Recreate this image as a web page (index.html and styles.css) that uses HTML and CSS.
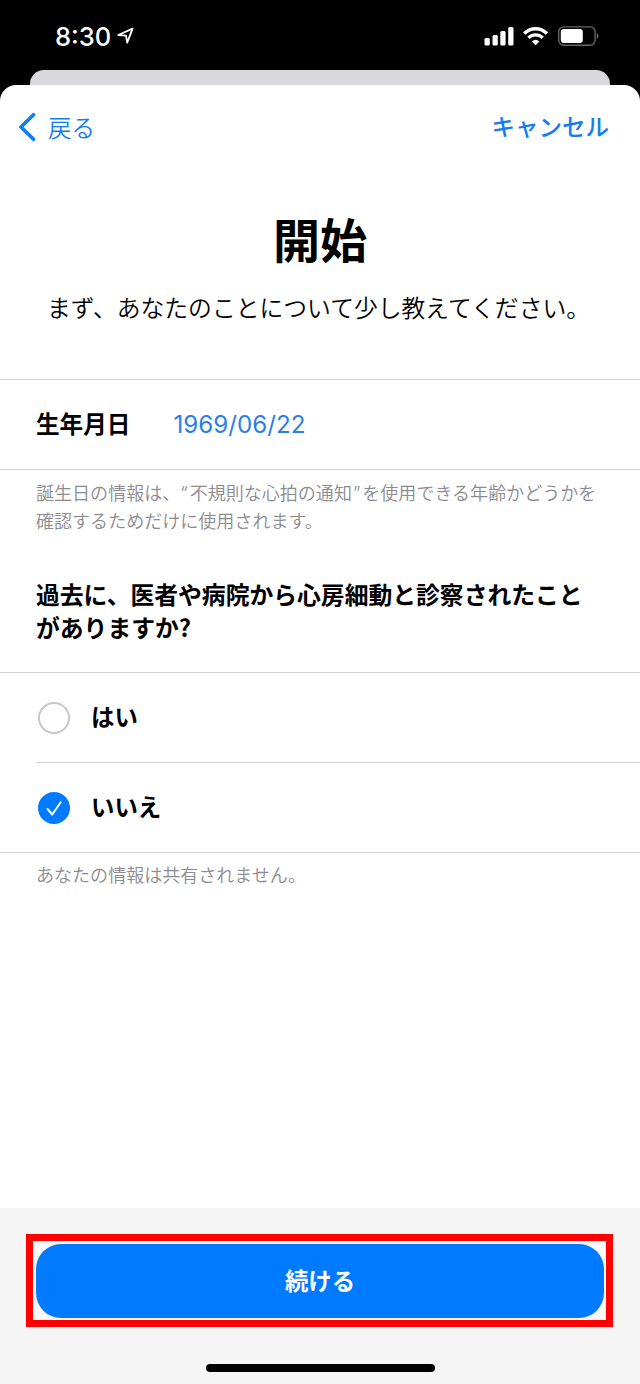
FILE: index.html
```html
<!DOCTYPE html>
<html lang="ja">
<head>
<meta charset="utf-8">
<title>開始</title>
<link rel="stylesheet" href="styles.css">
</head>
<body>
<div class="screen">
  <header class="status">
    <div class="clock">
      <span class="time">8:30</span>
      <svg class="location" width="18" height="18" viewBox="0 0 18 18"><path d="M1.3 8 15.6 1.6 10.2 15.6 9 8.7Z" fill="none" stroke="#fff" stroke-width="1.8" stroke-linejoin="round"/></svg>
    </div>
    <svg class="indicators" width="118" height="22" viewBox="0 0 118 22">
      <g fill="#fff">
        <rect x="1.5" y="13" width="5.3" height="7.4" rx="1.5"/>
        <rect x="9.5" y="10" width="5.3" height="10.4" rx="1.5"/>
        <rect x="17.3" y="6" width="5.3" height="14.4" rx="1.5"/>
        <rect x="25.2" y="2" width="5.3" height="18.4" rx="1.5"/>
      </g>
      <g fill="none" stroke="#fff" stroke-width="3.4">
        <path d="M41.2 8.5Q46.2 3.7 52.6 3.7T64 8.5"/>
        <path d="M45.4 12.8Q48.6 9.9 52.6 9.9T59.8 12.8"/>
      </g>
      <path d="M48.9 16.5Q52.6 13.1 56.3 16.5L52.6 20.2Z" fill="#fff"/>
      <rect x="75.7" y="1.9" width="36.4" height="18.3" rx="5" fill="none" stroke="#666" stroke-width="1.4"/>
      <rect x="77.8" y="4" width="22" height="14" rx="3" fill="#fff"/>
      <path d="M113.8 8q3.2 3 0 6Z" fill="#777"/>
    </svg>
  </header>
  <div class="back-sheet"></div>
  <main class="sheet">
    <nav class="nav">
      <a class="back"><svg width="18" height="30" viewBox="0 0 18 30"><path d="M15.5 2.7 3 15 15.5 27.3" fill="none" stroke="#147bf0" stroke-width="3.7" stroke-linecap="round" stroke-linejoin="round"/></svg><span>戻る</span></a>
      <a class="cancel">キャンセル</a>
    </nav>
    <h1 class="title">開始</h1>
    <p class="intro">まず、あなたのことについて少し教えてください。</p>
    <div class="birth">
      <span class="label">生年月日</span>
      <span class="date">1969/06/22</span>
    </div>
    <p class="note birth-note">誕生日の情報は、<span class="quote open">“</span>不規則な心拍の通知<span class="quote close">”</span>を使用できる年齢かどうかを<br>確認するためだけに使用されます。</p>
    <h2 class="question">過去に、医者や病院から心房細動と診察されたこと<br>がありますか?</h2>
    <div class="options">
      <div class="option"><span class="radio"></span><span class="answer">はい</span></div>
      <div class="option checked"><span class="radio"><svg width="32" height="32" viewBox="0 0 32 32"><path d="M9.5 17 14.2 22.5 22.7 10.3" fill="none" stroke="#fff" stroke-width="2" stroke-linecap="round" stroke-linejoin="round"/></svg></span><span class="answer">いいえ</span></div>
    </div>
    <p class="note share-note">あなたの情報は共有されません。</p>
  </main>
  <footer class="footer">
    <div class="highlight"><div class="continue">続ける</div></div>
    <div class="home"></div>
  </footer>
</div>
</body>
</html>
```
FILE: styles.css
```css
* { box-sizing: border-box; }
body, h1, h2, p { margin: 0; }
body {
  background: #000;
  color: #000;
  font-family: "Noto Sans CJK JP", sans-serif;
}
.screen {
  width: 640px;
  height: 1384px;
  display: flex;
  flex-direction: column;
  overflow: hidden;
}
.status {
  height: 70px;
  padding: 25px 39px 0 55px;
  display: flex;
  justify-content: space-between;
  align-items: flex-start;
}
.clock { display: flex; gap: 6px; color: #fff; }
.time {
  font: 500 25.5px/24px Inter, sans-serif;
}
.location { margin-top: 2px; }
.back-sheet {
  height: 15px;
  margin: 0 30px;
  background: #d9d9db;
  border-radius: 14px 14px 0 0;
}
.sheet {
  flex: 1;
  background: #fff;
  border-radius: 16px 16px 0 0;
}
.nav {
  height: 84px;
  padding: 0 31px 0 18px;
  display: flex;
  justify-content: space-between;
  align-items: center;
  color: #147bf0;
  font-size: 23.5px;
  line-height: 30px;
}
.back { display: flex; align-items: center; gap: 12px; }
.back span { font-weight: 350; padding-bottom: 1px; }
.cancel { font-weight: 500; padding-bottom: 2px; }
.title {
  margin-top: 34px;
  text-align: center;
  font-size: 47px;
  line-height: 70px;
  font-weight: 700;
}
.intro {
  height: 106px;
  padding: 18px 0 0 47px;
  font-size: 23.8px;
  line-height: 32px;
  font-weight: 350;
  white-space: nowrap;
}
.birth {
  height: 91px;
  padding: 0 36px;
  display: flex;
  align-items: center;
  gap: 43px;
  border-top: 1px solid #d2d2d4;
  border-bottom: 1px solid #d2d2d4;
  font-size: 23.6px;
}
.label { font-weight: 700; padding-bottom: 3px; }
.date { font-family: Inter, sans-serif; font-size: 24.2px; color: #2a80e8; }
.note {
  padding: 9px 0 0 36px;
  color: #8b8b90;
  font-size: 18.05px;
  line-height: 27px;
  font-weight: 350;
  white-space: nowrap;
}
.birth-note { height: 107px; }
.share-note { padding-top: 8px; }
.quote { font-family: Inter, sans-serif; }
.open { margin-right: 2px; }
.close { margin: 0 2px 0 1px; }
.question {
  height: 95px;
  padding-left: 36px;
  font-size: 23.8px;
  line-height: 33px;
  font-weight: 700;
  white-space: nowrap;
}
.options {
  border-top: 1px solid #d2d2d4;
  border-bottom: 1px solid #d2d2d4;
}
.option {
  height: 89px;
  margin-left: 36px;
  padding-left: 2px;
  display: flex;
  align-items: center;
  gap: 21px;
  font-size: 23.4px;
  font-weight: 700;
}
.option + .option { height: 90px; border-top: 1px solid #d2d2d4; }
.answer { padding-bottom: 3px; }
.radio {
  width: 32px;
  height: 32px;
  border: 2px solid #c7c7cb;
  border-radius: 50%;
}
.checked .radio { border: 0; background: #007aff; }
.radio svg { display: block; }
.footer {
  height: 176px;
  padding: 26px 27px 0 26px;
  background: #f5f5f5;
}
.highlight {
  height: 93px;
  padding: 3px 2px 2px 3px;
  border: 7px solid #f00;
  background: #f9f9f9;
}
.continue {
  height: 74px;
  border-radius: 25px;
  background: #007aff;
  color: #fff;
  text-align: center;
  font-size: 23.4px;
  line-height: 73px;
  font-weight: 700;
}
.home {
  width: 229px;
  height: 8px;
  margin: 37px 0 0 180px;
  border-radius: 4px;
  background: #000;
}
```
